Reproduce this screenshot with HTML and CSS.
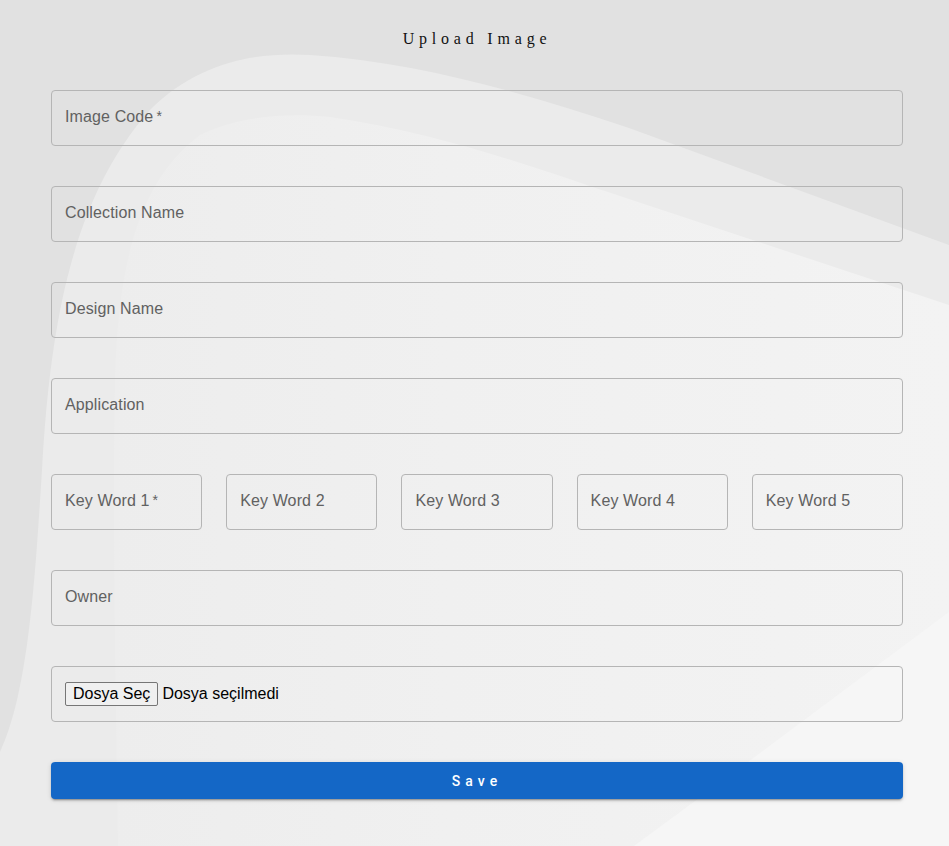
FILE: index.html
```html
<!DOCTYPE html>
<html lang="en">
<head>
<meta charset="utf-8">
<title>Upload Image</title>
<link rel="stylesheet" href="styles.css">
</head>
<body>
<div class="page">
  <svg class="bg" width="949" height="846" viewBox="0 0 949 846" preserveAspectRatio="none" aria-hidden="true">
    <defs>
      <linearGradient id="inner" x1="0" y1="0" x2="1" y2="0">
        <stop offset="0" stop-color="#ededed"/>
        <stop offset="0.4" stop-color="#f0f0f0"/>
        <stop offset="1" stop-color="#f3f3f3"/>
      </linearGradient>
    </defs>
    <rect x="0" y="0" width="949" height="846" fill="#e1e1e1"/>
    <path d="M0 752 C 30 690, 36 560, 42 470 C 50 330, 70 200, 150 110 C 200 60, 260 52, 310 55 C 420 62, 530 95, 629 128 L 949 245 L 949 846 L 0 846 Z" fill="#ebebeb"/>
    <path d="M118 846 C 116 700, 112 520, 115 380 C 118 260, 140 180, 200 135 C 240 115, 290 113, 330 117 C 450 135, 540 170, 629 199 L 949 305 L 949 846 Z" fill="url(#inner)"/>
    <path d="M949 612 L 752 759 L 634 846 L 949 846 Z" fill="#f6f6f6"/>
  </svg>
  <main class="main">
    <h1 class="title">Upload Image</h1>
    <form class="form">
      <div class="field"><span class="label">Image Code<span class="req">*</span></span></div>
      <div class="field"><span class="label">Collection Name</span></div>
      <div class="field"><span class="label">Design Name</span></div>
      <div class="field"><span class="label">Application</span></div>
      <div class="keywords">
        <div class="field"><span class="label">Key Word 1<span class="req">*</span></span></div>
        <div class="field"><span class="label">Key Word 2</span></div>
        <div class="field"><span class="label">Key Word 3</span></div>
        <div class="field"><span class="label">Key Word 4</span></div>
        <div class="field"><span class="label">Key Word 5</span></div>
      </div>
      <div class="field"><span class="label">Owner</span></div>
      <div class="field file-field">
        <span class="file-btn">Dosya Seç</span>
        <span class="file-name">Dosya seçilmedi</span>
      </div>
      <button type="button" class="save">Save</button>
    </form>
  </main>
</div>
</body>
</html>
```
FILE: styles.css
```css
* { box-sizing: border-box; }
html, body { margin: 0; padding: 0; }
body { font-family: "Liberation Sans", Arial, sans-serif; background: #e1e1e1; }
.page { position: relative; width: 949px; min-height: 846px; overflow: hidden; }
.bg { position: absolute; left: 0; top: 0; z-index: 0; }
.main { position: relative; z-index: 1; padding: 30px 46px 0 51px; }
.title {
  margin: 0;
  font-family: "Liberation Serif", "Times New Roman", serif;
  font-weight: normal;
  font-size: 16px;
  line-height: 18px;
  letter-spacing: 0.3em;
  text-align: center;
  color: #111;
}
.form { display: flex; flex-direction: column; gap: 40px; margin-top: 42px; }
.field {
  height: 56px;
  border: 1px solid #b5b5b5;
  border-radius: 4px;
  display: flex;
  align-items: center;
  padding: 0 13px 3px;
}
.label { font-size: 16px; letter-spacing: 0.12px; color: #616161; white-space: nowrap; }
.req { margin-left: 3px; font-size: 14px; position: relative; top: -1px; }
.keywords { display: grid; grid-template-columns: repeat(5, 1fr); gap: 24px; }
.file-field { gap: 4px; padding-bottom: 0; }
.file-btn {
  font-size: 16px;
  color: #000;
  background: #f0f0f0;
  border: 1px solid #767676;
  border-radius: 2px;
  height: 24px;
  line-height: 22px;
  padding: 0 7px;
}
.file-name { font-size: 16px; color: #000; }
.save {
  height: 37px;
  border: none;
  border-radius: 4px;
  background: #1467c6;
  color: #fff;
  font-family: Roboto, "Liberation Sans", sans-serif;
  font-weight: 500;
  font-size: 14px;
  letter-spacing: 0.36em;
  box-shadow: 0 3px 1px -2px rgba(0,0,0,.2), 0 2px 2px 0 rgba(0,0,0,.14), 0 1px 5px 0 rgba(0,0,0,.12);
  cursor: pointer;
}
```
